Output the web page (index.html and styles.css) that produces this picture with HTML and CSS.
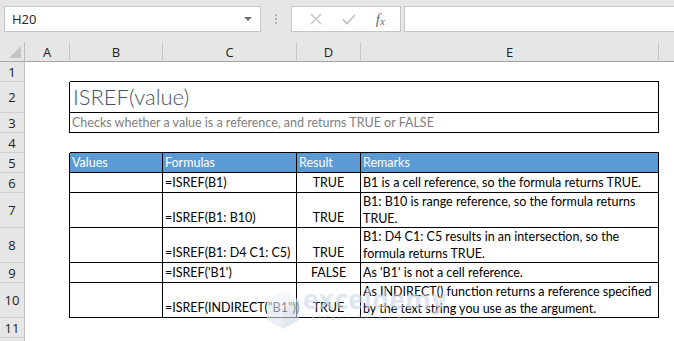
FILE: index.html
```html
<!DOCTYPE html>
<html>
  <head>
    <title>ISREF</title>
    <link rel="stylesheet" href="styles.css">
  </head>
  <body>
    <div class="toolbar">
      <div class="name-box">
        <span class="name">H20</span>
        <span class="caret"></span>
      </div>
      <div class="grip"><i></i><i></i><i></i></div>
      <div class="fx-buttons">
        <svg class="icon" width="14" height="14" viewBox="0 0 14 14">
          <path d="M2 2 L12 12 M12 2 L2 12" stroke="#c4c4c4" stroke-width="1.4" fill="none"/>
        </svg>
        <svg class="icon" width="16" height="14" viewBox="0 0 16 14">
          <path d="M2 7.5 L6 11.5 L14 3" stroke="#c4c4c4" stroke-width="1.8" fill="none"/>
        </svg>
        <span class="fx">f<sub>x</sub></span>
      </div>
      <div class="formula-bar"></div>
    </div>

    <div class="sheet">
      <!-- column headers -->
      <div class="corner"><span class="tri"></span></div>
      <div class="ch">A</div>
      <div class="ch">B</div>
      <div class="ch">C</div>
      <div class="ch">D</div>
      <div class="ch">E</div>
      <div class="ch last"></div>

      <!-- row 1 -->
      <div class="rh">1</div>
      <div class="cell"></div>
      <div class="cell span4 bb"></div>
      <div class="cell"></div>

      <!-- row 2 -->
      <div class="rh">2</div>
      <div class="cell br"></div>
      <div class="cell span4 bb br title">ISREF(value)</div>
      <div class="cell"></div>

      <!-- row 3 -->
      <div class="rh">3</div>
      <div class="cell br"></div>
      <div class="cell span4 bb br subtitle">Checks whether a value is a reference, and returns TRUE or FALSE</div>
      <div class="cell"></div>

      <!-- row 4 -->
      <div class="rh">4</div>
      <div class="cell"></div>
      <div class="cell span4 bb"></div>
      <div class="cell"></div>

      <!-- row 5 -->
      <div class="rh">5</div>
      <div class="cell br"></div>
      <div class="cell bb br head">Values</div>
      <div class="cell bb br head">Formulas</div>
      <div class="cell bb br head">Result</div>
      <div class="cell bb br head">Remarks</div>
      <div class="cell"></div>

      <!-- row 6 -->
      <div class="rh">6</div>
      <div class="cell br"></div>
      <div class="cell bb br"></div>
      <div class="cell bb br">=ISREF(B1)</div>
      <div class="cell bb br num">TRUE</div>
      <div class="cell bb br">B1 is a cell reference, so the formula returns TRUE.</div>
      <div class="cell"></div>

      <!-- row 7 -->
      <div class="rh">7</div>
      <div class="cell br"></div>
      <div class="cell bb br"></div>
      <div class="cell bb br">=ISREF(B1: B10)</div>
      <div class="cell bb br num">TRUE</div>
      <div class="cell bb br wrap">B1: B10 is range reference, so the formula returns TRUE.</div>
      <div class="cell"></div>

      <!-- row 8 -->
      <div class="rh">8</div>
      <div class="cell br"></div>
      <div class="cell bb br"></div>
      <div class="cell bb br">=ISREF(B1: D4 C1: C5)</div>
      <div class="cell bb br num">TRUE</div>
      <div class="cell bb br wrap">B1: D4 C1: C5 results in an intersection, so the formula returns TRUE.</div>
      <div class="cell"></div>

      <!-- row 9 -->
      <div class="rh">9</div>
      <div class="cell br"></div>
      <div class="cell bb br"></div>
      <div class="cell bb br">=ISREF('B1')</div>
      <div class="cell bb br num">FALSE</div>
      <div class="cell bb br">As 'B1' is not a cell reference.</div>
      <div class="cell"></div>

      <!-- row 10 -->
      <div class="rh">10</div>
      <div class="cell br"></div>
      <div class="cell bb br"></div>
      <div class="cell bb br">=ISREF(INDIRECT("B1"))</div>
      <div class="cell bb br num">TRUE</div>
      <div class="cell bb br wrap">As INDIRECT() function returns a reference specified by the text string you use as the argument.</div>
      <div class="cell"></div>

      <!-- row 11 -->
      <div class="rh">11</div>
      <div class="cell"></div>
      <div class="cell span4"></div>
      <div class="cell"></div>

      <!-- row 12, only its top edge shows -->
      <div class="rh"></div>
      <div class="cell"></div>
      <div class="cell span4"></div>
      <div class="cell"></div>
    </div>

    <!-- watermark -->
    <div class="watermark">
      <svg width="34" height="40" viewBox="0 0 34 40">
        <path d="M17 1 L33 10 L33 30 L17 39 L1 30 L1 10 Z" fill="#dfe5ee"/>
        <path d="M17 1 L33 10 L17 19 L1 10 Z" fill="#edf1f6"/>
        <path d="M17 19 L33 10 L33 30 L17 39 Z" fill="#d3dbe6"/>
      </svg>
      <div class="wm-text">
        <span class="wm-name">exceldemy</span>
        <span class="wm-tag">EXCEL · DATA · BI</span>
      </div>
    </div>
  </body>
</html>
```

FILE: styles.css
```css
body {
  margin: 0;
  width: 674px;
  height: 341px;
  overflow: hidden;
  background: #ffffff;
  font-family: Lato, "Open Sans", sans-serif;
  font-size: 12.5px;
  color: #000000;
  position: relative;
}

/* toolbar */
.toolbar {
  height: 42px;
  background: #e6e6e6;
  display: flex;
  align-items: flex-start;
  padding-top: 6px;
  box-sizing: border-box;
}

.name-box {
  margin-left: 4px;
  width: 257px;
  height: 26px;
  box-sizing: border-box;
  background: #ffffff;
  border: 1px solid #c6c6c6;
  display: flex;
  align-items: center;
  justify-content: space-between;
  padding: 0 8px 0 7px;
}

.name {
  font-family: "Open Sans", sans-serif;
  font-size: 13px;
  color: #222222;
}

.caret {
  width: 0;
  height: 0;
  border-left: 4px solid transparent;
  border-right: 4px solid transparent;
  border-top: 4px solid #6f6f6f;
}

.grip {
  width: 30px;
  height: 26px;
  display: flex;
  flex-direction: column;
  align-items: center;
  justify-content: center;
  gap: 2px;
}

.grip i {
  width: 2px;
  height: 2px;
  background: #b4b4b4;
}

.fx-buttons {
  width: 110px;
  height: 26px;
  box-sizing: border-box;
  background: #ffffff;
  border: 1px solid #c6c6c6;
  display: flex;
  align-items: center;
  justify-content: space-around;
  padding: 0 6px 0 8px;
}

.fx {
  font-family: "Liberation Serif", serif;
  font-style: italic;
  font-size: 15px;
  color: #6b6b6b;
}

.fx sub {
  font-size: 11px;
  vertical-align: -1px;
}

.formula-bar {
  margin-left: 3px;
  flex-grow: 1;
  height: 26px;
  box-sizing: border-box;
  background: #ffffff;
  border: 1px solid #c6c6c6;
  border-right: none;
}

/* sheet grid */
.sheet {
  display: grid;
  grid-template-columns: 25px 45px 93px 134px 64px 298px 15px;
  grid-template-rows: 20px 20px 31px 20px 20px 20px 20px 35px 35px 20px 35px 20px 20px;
}

.corner {
  background: #e6e6e6;
  border-right: 1px solid #bcbcbc;
  border-bottom: 1px solid #a5a5a5;
  box-sizing: border-box;
  position: relative;
}

.tri {
  position: absolute;
  right: 3px;
  bottom: 3px;
  width: 0;
  height: 0;
  border-left: 12px solid transparent;
  border-bottom: 12px solid #c3c3c3;
}

.ch {
  background: #e6e6e6;
  border-right: 1px solid #c8c8c8;
  border-bottom: 1px solid #a5a5a5;
  box-sizing: border-box;
  display: flex;
  align-items: center;
  justify-content: center;
  font-family: "Open Sans", sans-serif;
  font-size: 13px;
  color: #222222;
}

.ch.last {
  border-right: none;
}

.rh {
  background: #e6e6e6;
  border-right: 1px solid #bcbcbc;
  border-bottom: 1px solid #d0d0d0;
  box-sizing: border-box;
  display: flex;
  align-items: center;
  justify-content: center;
  font-family: "Open Sans", sans-serif;
  font-size: 13px;
  color: #222222;
}

.cell {
  box-sizing: border-box;
  display: flex;
  align-items: flex-end;
  padding: 0 2px 1px 2px;
  line-height: 17px;
  white-space: nowrap;
  overflow: visible;
}

.span4 {
  grid-column: span 4;
}

.bb {
  border-bottom: 1px solid #000000;
}

.br {
  border-right: 1px solid #000000;
}

.title {
  font-weight: 300;
  font-size: 22px;
  line-height: 28px;
  color: #44546a;
  padding-left: 3px;
}

.subtitle {
  color: #808080;
  padding-left: 2px;
}

.head {
  background: #5b9bd5;
  color: #ffffff;
}

.num {
  justify-content: center;
}

.wrap {
  white-space: normal;
  align-items: flex-start;
  padding-top: 0;
}

/* watermark */
.watermark {
  position: absolute;
  left: 266px;
  top: 290px;
  display: flex;
  align-items: flex-start;
  gap: 3px;
  opacity: 0.6;
  pointer-events: none;
}

.wm-text {
  display: flex;
  flex-direction: column;
  margin-top: -7px;
}

.wm-name {
  font-family: "Open Sans", sans-serif;
  font-weight: 700;
  font-size: 26px;
  line-height: 32px;
  color: #c9d6ea;
  letter-spacing: 0.5px;
}

.wm-tag {
  font-family: "Open Sans", sans-serif;
  font-size: 8px;
  letter-spacing: 2px;
  color: #cfcfcf;
  margin-left: 8px;
  margin-top: -4px;
}
```
